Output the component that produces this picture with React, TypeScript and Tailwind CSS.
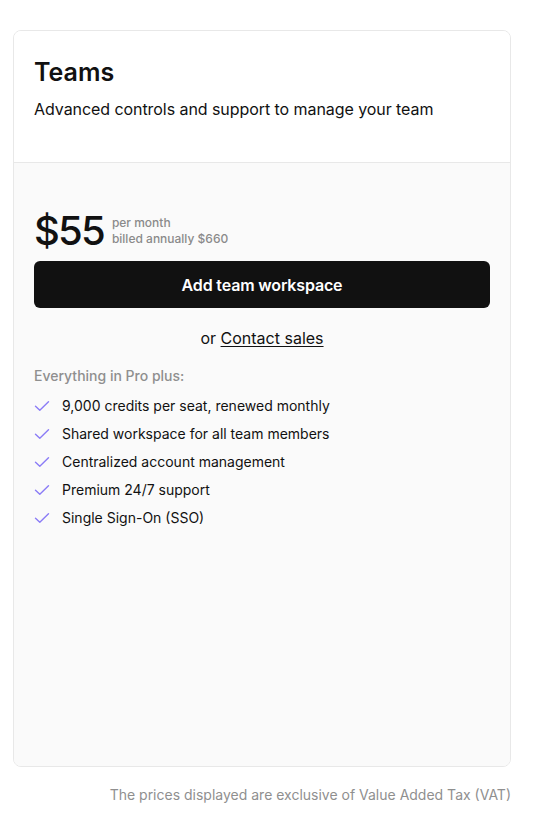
import React from "react";

const features = [
  "9,000 credits per seat, renewed monthly",
  "Shared workspace for all team members",
  "Centralized account management",
  "Premium 24/7 support",
  "Single Sign-On (SSO)",
];

function Check() {
  return (
    <svg width="16" height="16" viewBox="0 0 16 16" fill="none" className="shrink-0">
      <path d="M1.5 8.2 L5.8 12.3 L14.5 3.8" stroke="#8b7cf6" strokeWidth="1.4" strokeLinecap="round" strokeLinejoin="round" />
    </svg>
  );
}

export default function App() {
  return (
    <div className="min-h-[821px] w-[548px] bg-white text-[#111] overflow-hidden" style={{ fontFamily: "Inter, 'Noto Sans', sans-serif" }}>
      <div className="ml-[13px] mt-[30px] w-[498px] h-[737px] rounded-lg border border-[#e8e8e8] overflow-hidden flex flex-col">
        <div className="bg-white px-[20px] pt-[25px] pb-[41px] border-b border-[#e8e8e8]">
          <h2 className="text-[25px] leading-[33px] font-semibold">Teams</h2>
          <p className="mt-[8px] text-[16px] leading-[24px] tracking-[-0.004em]">Advanced controls and support to manage your team</p>
        </div>
        <div className="flex-1 bg-[#fafafa] px-[20px] pt-[48px]">
          <div className="flex items-center gap-[8px]">
            <span className="text-[40px] leading-[40px] font-medium tracking-[-0.045em]">$55</span>
            <div className="flex flex-col text-[12px] leading-[16px] font-medium text-[#8a8a8a]">
              <span>per month</span>
              <span>billed annually $660</span>
            </div>
          </div>
          <button className="mt-[10px] w-full h-[47px] rounded-[6px] bg-[#111111] text-white text-[16px] font-semibold tracking-[-0.01em]">
            Add team workspace
          </button>
          <p className="mt-[18px] text-center text-[16px] leading-[24px]">
            or <a className="underline underline-offset-2" href="#">Contact sales</a>
          </p>
          <p className="mt-[16px] text-[14px] leading-[20px] font-medium text-[#8f8f8f]">Everything in Pro plus:</p>
          <ul className="mt-[10px] flex flex-col gap-[8px]">
            {features.map((f) => (
              <li key={f} className="flex items-center gap-[12px] text-[14px] leading-[20px]">
                <Check />
                <span>{f}</span>
              </li>
            ))}
          </ul>
        </div>
      </div>
      <p className="mt-[18px] w-[511px] text-right text-[14px] leading-[20px] text-[#8f8f8f]">
        The prices displayed are exclusive of Value Added Tax (VAT)
      </p>
    </div>
  );
}
